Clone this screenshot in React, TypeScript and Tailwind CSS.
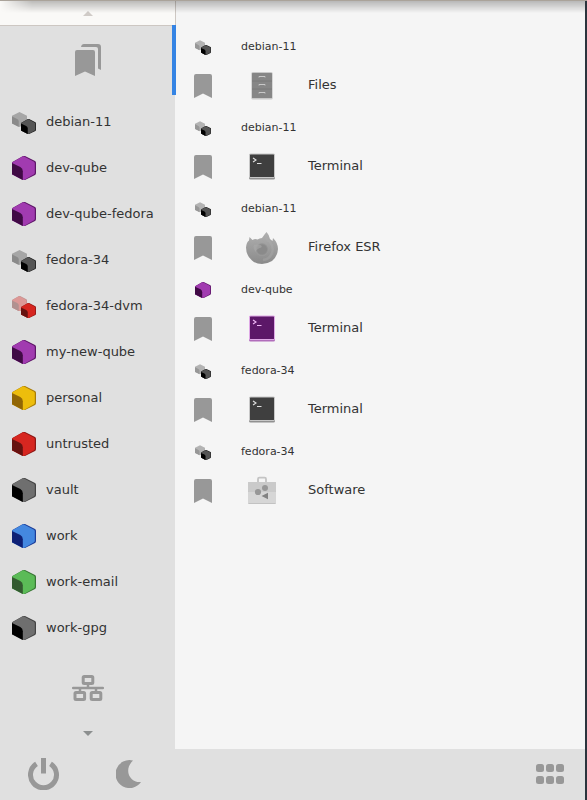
import React from "react";

type Tone = { face: string; side: string; edge: string };

const tones: Record<string, Tone> = {
  purple: { face: "#a13bb0", side: "#400a45", edge: "#5e1668" },
  yellow: { face: "#edbd0c", side: "#916605", edge: "#a87c08" },
  red: { face: "#d62620", side: "#661210", edge: "#8c1714" },
  gray: { face: "#6f6f6f", side: "#000000", edge: "#444444" },
  black: { face: "#555555", side: "#000000", edge: "#1c1c1c" },
  blue: { face: "#4488e0", side: "#0e2075", edge: "#1c3d98" },
  green: { face: "#5bbb57", side: "#335a30", edge: "#387635" },
};

function Cube({ tone }: { tone: Tone }) {
  return (
    <g>
      <path d="M11 0 H13 L23 5 Q24 5.6 24 7 V17 Q24 18.3 23 19 L13 24 H11 L0 18.2 V6.2 Z" fill={tone.edge} />
      <path d="M12 0.4 L22 5.8 Q22.8 6.3 22.8 7.4 V16.6 Q22.8 17.7 22 18.2 L12 24 H11 L0 18.2 V6.6 L11 0.3 Z" fill={tone.face} />
      <path d="M0 7 L8.3 11 Q10.8 12.3 10.8 15.2 V24 L0 18.2 Z" fill={tone.side} />
    </g>
  );
}

function QubeIcon({ tone, template, className }: { tone: string; template?: boolean; className: string }) {
  return (
    <svg viewBox="0 0 24 24" className={className} aria-hidden="true">
      {template ? (
        <>
          <g transform="translate(0 2) scale(0.625)" opacity="0.38">
            {tone === "black" ? (
              <>
                <path d="M12 0 L24 6 V18 L12 24 L0 18 V6 Z" fill="#4a4a4a" />
                <path d="M0 7 L8.3 11 Q10.8 12.3 10.8 15.2 V24 L0 18.2 Z" fill="#000000" />
              </>
            ) : (
              <Cube tone={tones[tone]} />
            )}
          </g>
          <g transform="translate(9 9) scale(0.625)">
            <Cube tone={tones[tone]} />
          </g>
        </>
      ) : (
        <Cube tone={tones[tone]} />
      )}
    </svg>
  );
}

function BookmarkIcon() {
  return (
    <svg viewBox="0 0 18 32" className="h-8 w-[18px]" aria-hidden="true">
      <path d="M0 6 Q0 4 2 4 H16 Q18 4 18 6 V28 L9 23.5 L0 28 Z" fill="#989898" />
    </svg>
  );
}

function FilesIcon() {
  return (
    <svg viewBox="0 0 32 32" className="size-8" aria-hidden="true">
      <rect x="5.3" y="2" width="21.4" height="27.5" rx="1.5" fill="#c9c9c9" />
      <rect x="6" y="3" width="20" height="25" rx="0.5" fill="#868686" />
      <path d="M6 11 H26 M6 19 H26" stroke="#777777" strokeWidth="0.8" />
      <path d="M13 7.5 V6.5 H19 V7.5 M13 15.5 V14.5 H19 V15.5 M13 23.5 V22.5 H19 V23.5" stroke="#d0d0d0" strokeWidth="0.9" fill="none" />
    </svg>
  );
}

function TerminalIcon({ purple }: { purple?: boolean }) {
  return (
    <svg viewBox="0 0 32 32" className="size-8" aria-hidden="true">
      <rect x="3" y="3" width="26" height="25.6" rx="1.5" fill={purple ? "#b16dbb" : "#919191"} />
      <rect x="3" y="2.6" width="26" height="24.4" rx="1.5" fill={purple ? "#dfa9e6" : "#c8c8c8"} />
      <rect x="4" y="3.5" width="24" height="22.5" rx="0.5" fill={purple ? "#5c1868" : "#3f3f3f"} />
      <path d="M7 7 L10 9 L7 11" fill="none" stroke={purple ? "#efb8f5" : "#e0e0e0"} strokeWidth="1.1" />
      <path d="M11 12.5 H15.5" stroke={purple ? "#efb8f5" : "#e0e0e0"} />
    </svg>
  );
}

function FirefoxIcon() {
  return (
    <svg viewBox="0 0 32 32" className="size-8" aria-hidden="true">
      <defs>
        <linearGradient id="fur" x1="0" y1="0" x2="0" y2="1">
          <stop offset="0" stopColor="#b0b0b0" />
          <stop offset="1" stopColor="#8a8a8a" />
        </linearGradient>
        <radialGradient id="globe">
          <stop offset="0" stopColor="#8a8a8a" />
          <stop offset="0.7" stopColor="#8a8a8a" />
          <stop offset="1" stopColor="#9d9d9d" />
        </radialGradient>
      </defs>
      <path
        d="M3.5 5 L6.5 8 Q9 6.5 11.5 7.5 Q13.5 6 16 6 Q18 3 20.5 0 Q23 2.5 24 7 L26.5 9 L27 6 Q32 11 32 17 Q31.5 24.5 26 29 Q21 32 16 32 Q10 32 6 28.5 Q0 23.5 0 15.5 Q0.5 10 3 8.5 Z"
        fill="url(#fur)"
      />
      <circle cx="16" cy="17.5" r="6.5" fill="url(#globe)" />
      <path d="M8 13 Q11 12 14.5 13 Q17 14.5 14.5 15.8 Q10.5 17 9.5 20 Q6.5 16 8 13 Z" fill="#aaaaaa" opacity="0.6" />
      <path d="M20 4 Q20 8 24 10 Q28 15 26 21 Q24 27 17 28" fill="none" stroke="#acacac" strokeWidth="2.5" opacity="0.4" />
    </svg>
  );
}

function SoftwareIcon() {
  return (
    <svg viewBox="0 0 32 32" className="size-8" aria-hidden="true">
      <path d="M12 7 V4 Q12 2.7 13.3 2.7 H18.7 Q20 2.7 20 4 V7" fill="none" stroke="#c4c4c4" strokeWidth="1.8" />
      <rect x="2" y="7" width="28" height="22" rx="1" fill="#c2c2c2" />
      <rect x="2" y="7" width="28" height="10" rx="1" fill="#cacaca" />
      <rect x="2" y="17" width="28" height="11" fill="#d6d6d6" />
      <circle cx="19" cy="13" r="3" fill="#979797" />
      <circle cx="12" cy="17" r="3.1" fill="#979797" />
      <path d="M15.5 21 L22 17.7 V24.3 Z" fill="#828282" />
    </svg>
  );
}

const qubes = [
  { name: "debian-11", tone: "black", template: true },
  { name: "dev-qube", tone: "purple" },
  { name: "dev-qube-fedora", tone: "purple" },
  { name: "fedora-34", tone: "black", template: true },
  { name: "fedora-34-dvm", tone: "red", template: true },
  { name: "my-new-qube", tone: "purple" },
  { name: "personal", tone: "yellow" },
  { name: "untrusted", tone: "red" },
  { name: "vault", tone: "gray" },
  { name: "work", tone: "blue" },
  { name: "work-email", tone: "green" },
  { name: "work-gpg", tone: "gray" },
];

const favorites = [
  { qube: "debian-11", tone: "black", template: true, app: "Files", icon: <FilesIcon /> },
  { qube: "debian-11", tone: "black", template: true, app: "Terminal", icon: <TerminalIcon /> },
  { qube: "debian-11", tone: "black", template: true, app: "Firefox ESR", icon: <FirefoxIcon /> },
  { qube: "dev-qube", tone: "purple", template: false, app: "Terminal", icon: <TerminalIcon purple /> },
  { qube: "fedora-34", tone: "black", template: true, app: "Terminal", icon: <TerminalIcon /> },
  { qube: "fedora-34", tone: "black", template: true, app: "Software", icon: <SoftwareIcon /> },
];

export default function App() {
  return (
    <div className="relative flex min-h-screen flex-col border-t border-[#aaa39a] bg-[#f5f5f5] font-['DejaVu_Sans',sans-serif] text-[13px] leading-5 text-[#333333]">
      <div className="flex grow flex-col border-r-2 border-[#2b343d]">
        <div className="flex grow">
          <nav aria-label="Qubes" className="flex w-[175px] shrink-0 flex-col bg-[#e0e0e0]">
            <button aria-label="Scroll up" className="box-content flex h-6 w-full items-center justify-center border-r border-b border-[#cdc7c2] bg-[#faf9f7]">
              <svg viewBox="0 0 10 5" className="h-[5px] w-2.5" aria-hidden="true">
                <path d="M0 5 L5 0 L10 5 Z" fill="#d0cbc7" />
              </svg>
            </button>
            <div className="relative h-[73px]">
              <button aria-label="Favorites" className="flex h-17 w-full items-center justify-center">
                <svg viewBox="0 0 26 32" className="h-8 w-[26px]" aria-hidden="true">
                  <path d="M0 8 Q0 6 2 6 H18 Q20 6 20 8 V32 L10 27.5 L0 32 Z" fill="#989898" />
                  <path d="M6 3 Q6.5 0 9 0 H23 Q26 0 26 3 V26 L23 24.5 V5 Q23 3 21 3 Z" fill="#989898" />
                </svg>
              </button>
              <span className="absolute -top-px -right-px h-[70px] w-1 bg-[#3584e4]" />
            </div>
            <ul>
              {qubes.map((q) => (
                <li key={q.name}>
                  <button className="flex h-[46px] w-full items-center gap-2.5 pl-3 text-left">
                    <QubeIcon tone={q.tone} template={q.template} className="size-6" />
                    {q.name}
                  </button>
                </li>
              ))}
            </ul>
            <button aria-label="Service qubes" className="flex grow items-center justify-center pt-2">
              <svg viewBox="0 0 32 26" className="h-[26px] w-8" fill="none" stroke="#989898" aria-hidden="true">
                <g strokeWidth="3">
                  <rect x="11.2" y="1.5" width="9.6" height="7" rx="1" />
                  <rect x="3" y="17.5" width="9.6" height="7" rx="1" />
                  <rect x="19.2" y="17.5" width="9.6" height="7" rx="1" />
                </g>
                <path d="M1.2 13 H30.8" strokeWidth="2.5" strokeLinecap="round" />
                <path d="M16 9 V13 M8 13 V17 M24 13 V17" strokeWidth="2.5" />
              </svg>
            </button>
            <button aria-label="Scroll down" className="flex h-8 w-full items-center justify-center">
              <svg viewBox="0 0 10 5" className="h-[5px] w-2.5" aria-hidden="true">
                <path d="M0 0 L5 5 L10 0 Z" fill="#8c8f8f" />
              </svg>
            </button>
          </nav>
          <main className="flex grow flex-col gap-[3px] pt-8">
            {favorites.map((f, i) => (
              <section key={i}>
                <h2 className="flex h-7 items-center pl-5 text-[11px] leading-4">
                  <QubeIcon tone={f.tone} template={f.template} className="size-4" />
                  <span className="pl-[30px]">{f.qube}</span>
                </h2>
                <div className="flex h-[50px] items-center pl-[19px]">
                  <button aria-label={"Remove " + f.app + " from favorites"}>
                    <BookmarkIcon />
                  </button>
                  <button className="flex items-center gap-[30px] pl-[34px]">
                    {f.icon}
                    <span className="pb-0.5">{f.app}</span>
                  </button>
                </div>
              </section>
            ))}
          </main>
        </div>
        <footer className="flex h-[51px] items-center bg-[#e0e0e0] pr-5 pb-0.5 pl-7">
          <button aria-label="Power">
            <svg viewBox="0 0 32 32" className="h-8 w-8" fill="none" stroke="#989898" strokeWidth="5" aria-hidden="true">
              <path d="M8.5 5.8 A13 13 0 1 0 22.5 5.8" />
              <path d="M15.5 0 V15.5" />
            </svg>
          </button>
          <button aria-label="Sleep" className="pl-14">
            <svg viewBox="0 0 26 28" className="h-7 w-[26px]" aria-hidden="true">
              <path d="M17 0.5 A14 14 0 1 0 25 22 C14 23 7 10 17 0.5 Z" fill="#989898" />
            </svg>
          </button>
          <button aria-label="Applications" className="ml-auto">
            <svg viewBox="0 0 30 20" className="h-5 w-[30px]" fill="#989898" aria-hidden="true">
              {[1, 11, 21].map((x) => (
                <React.Fragment key={x}>
                  <rect x={x} y="0" width="8" height="8" rx="2.5" />
                  <rect x={x} y="12" width="8" height="8" rx="2.5" />
                </React.Fragment>
              ))}
            </svg>
          </button>
        </footer>
      </div>
      <div className="pointer-events-none absolute inset-x-0 top-0 mr-0.5 h-3 bg-linear-to-b from-black/25 to-transparent mask-l-from-[calc(100%-32px)] mask-l-to-100%" />
    </div>
  );
}
